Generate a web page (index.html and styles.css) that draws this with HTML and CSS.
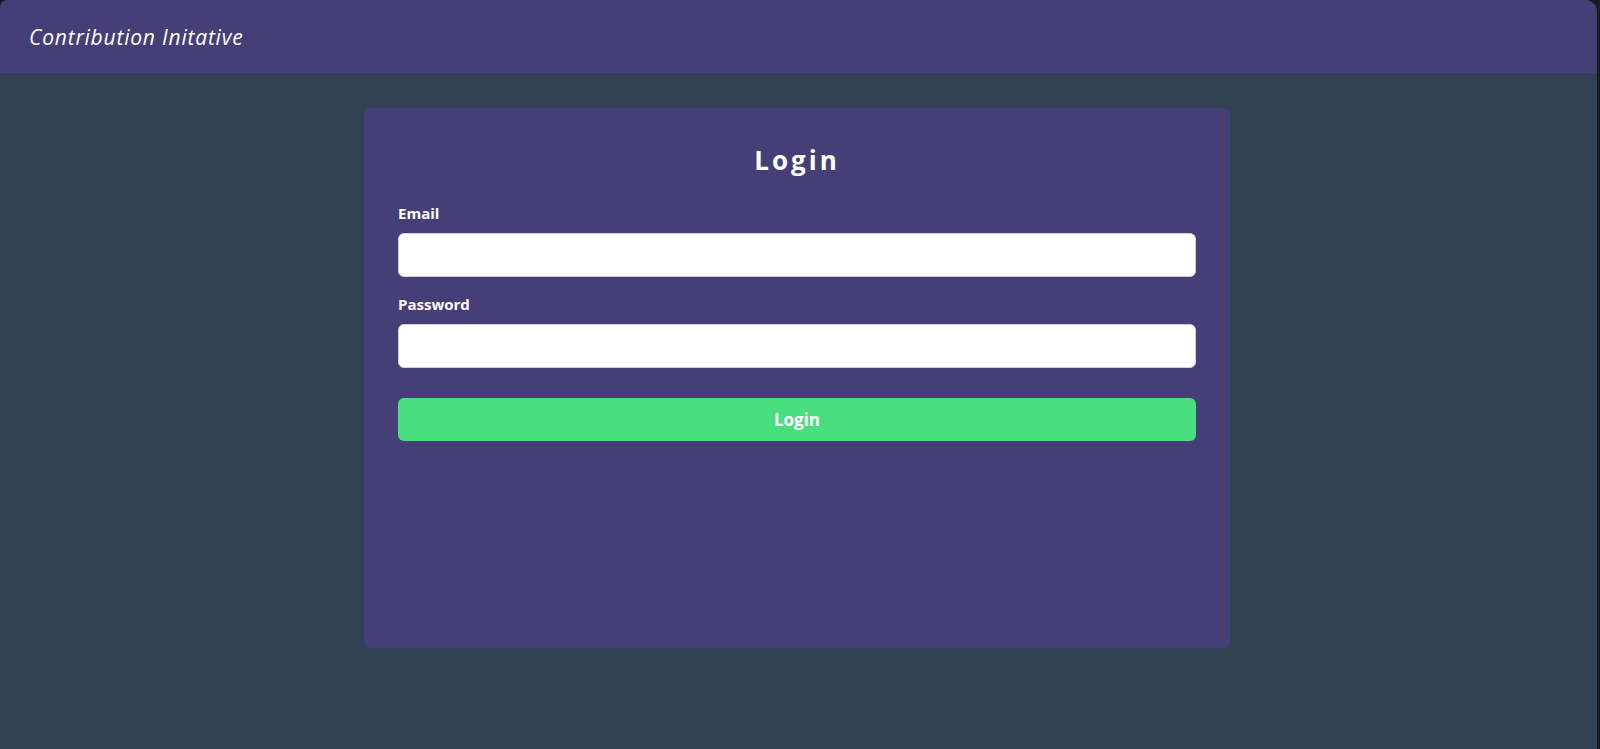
FILE: index.html
```html
<!DOCTYPE html>
<html lang="en">
<head>
<meta charset="utf-8">
<title>Contribution Initative - Login</title>
<link rel="stylesheet" href="styles.css">
</head>
<body>
<div class="app">
  <header class="topbar">
    <span class="brand">Contribution Initative</span>
  </header>
  <main class="main">
    <form class="card">
      <h1 class="card-title">Login</h1>
      <label class="field-label" for="email">Email</label>
      <input class="field-input" id="email" type="email">
      <label class="field-label" for="password">Password</label>
      <input class="field-input" id="password" type="password">
      <button class="submit" type="button">Login</button>
    </form>
  </main>
</div>
</body>
</html>
```
FILE: styles.css
```css
* { box-sizing: border-box; }
html, body { margin: 0; height: 100%; }
body {
  background: #1b1b24;
  font-family: "Open Sans", "Noto Sans", sans-serif;
  color: #fff;
}
.app {
  width: 1597px;
  height: 749px;
  background: #334155;
  border-radius: 8px 12px 0 0;
  overflow: hidden;
  display: flex;
  flex-direction: column;
}
.topbar {
  height: 73px;
  background: #463e77;
  display: flex;
  align-items: center;
  padding-left: 29px;
}
.brand {
  font-style: italic;
  font-size: 21px;
  color: #fff;
  letter-spacing: 0.8px;
}
.main {
  flex: 1;
  display: flex;
  justify-content: center;
  padding-top: 35px;
  padding-right: 3px;
}
.card {
  width: 866px;
  height: 540px;
  background: #463e77;
  border-radius: 6px;
  padding: 31px 34px;
  display: flex;
  flex-direction: column;
}
.card-title {
  margin: 1px 0 23px;
  text-align: center;
  font-size: 26px;
  font-weight: 700;
  letter-spacing: 3px;
  line-height: 40px;
}
.field-label {
  font-size: 15px;
  font-weight: 700;
  line-height: 20px;
  margin-bottom: 10px;
}
.field-input {
  height: 44px;
  border: 1px solid #cfd2dc;
  border-radius: 6px;
  background: #fff;
  margin: 0 0 17px;
  padding: 0 12px;
  font: inherit;
}
.submit {
  margin-top: 13px;
  height: 43px;
  border: 0;
  border-radius: 6px;
  background: #4ade80;
  color: #fff;
  font-family: inherit;
  font-size: 17px;
  font-weight: 700;
}
```
